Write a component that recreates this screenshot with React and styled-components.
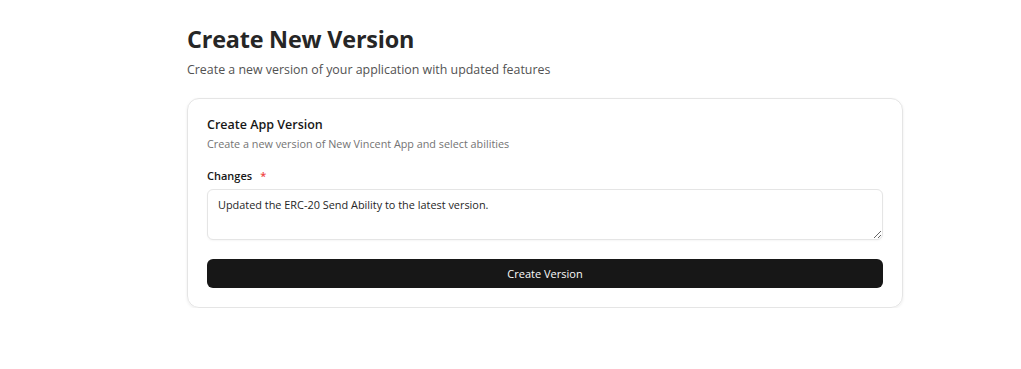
import React from "react"
import styled, { createGlobalStyle } from "styled-components"

const GlobalStyle = createGlobalStyle`
	body {
		margin: 0;
		background: #ffffff;
		font-family: "Open Sans", "Noto Sans", sans-serif;
		color: #1c1917;
	}
`

const Page = styled.main`
	padding: 22px 0 0 187px;
	width: 716px;
`

const Title = styled.h1`
	margin: 0;
	font-size: 23.4px;
	line-height: 34px;
	font-weight: 700;
	color: #262626;
	letter-spacing: -0.2px;
`

const Subtitle = styled.p`
	margin: 4px 0 0;
	font-size: 12.4px;
	line-height: 20px;
	color: #525252;
`

const Card = styled.section`
	margin-top: 18px;
	border: 1px solid #e5e5e5;
	border-radius: 12px;
	box-shadow: 0 1px 3px rgba(0, 0, 0, 0.08);
	padding: 17px 19px 19px;
`

const CardTitle = styled.h2`
	margin: 0;
	font-size: 12.5px;
	line-height: 18px;
	font-weight: 600;
	color: #171717;
`

const CardText = styled.p`
	margin: 2px 0 0;
	font-size: 10.8px;
	line-height: 16px;
	color: #737373;
`

const Label = styled.label`
	display: flex;
	gap: 8px;
	margin-top: 16px;
	font-size: 11px;
	line-height: 16px;
	font-weight: 600;
	color: #171717;
	span {
		color: #ef4444;
	}
`

const TextArea = styled.textarea`
	display: block;
	box-sizing: border-box;
	width: 100%;
	height: 51px;
	margin-top: 5px;
	padding: 7px 10px;
	border: 1px solid #e5e5e5;
	border-radius: 6px;
	font-family: inherit;
	font-size: 10.9px;
	line-height: 16px;
	color: #262626;
	resize: vertical;
	outline: none;
	box-shadow: 0 1px 2px rgba(0, 0, 0, 0.04);
`

const Button = styled.button`
	display: block;
	width: 100%;
	height: 29px;
	margin-top: 19px;
	border: none;
	border-radius: 6px;
	background: #171717;
	color: #fafafa;
	font-family: inherit;
	font-size: 11px;
	font-weight: 500;
	cursor: pointer;
`

export default function App() {
	return (
		<>
			<GlobalStyle />
			<Page>
				<Title>Create New Version</Title>
				<Subtitle>Create a new version of your application with updated features</Subtitle>
				<Card>
					<CardTitle>Create App Version</CardTitle>
					<CardText>Create a new version of New Vincent App and select abilities</CardText>
					<Label>
						Changes <span>*</span>
					</Label>
					<TextArea defaultValue="Updated the ERC-20 Send Ability to the latest version." />
					<Button>Create Version</Button>
				</Card>
			</Page>
		</>
	)
}
